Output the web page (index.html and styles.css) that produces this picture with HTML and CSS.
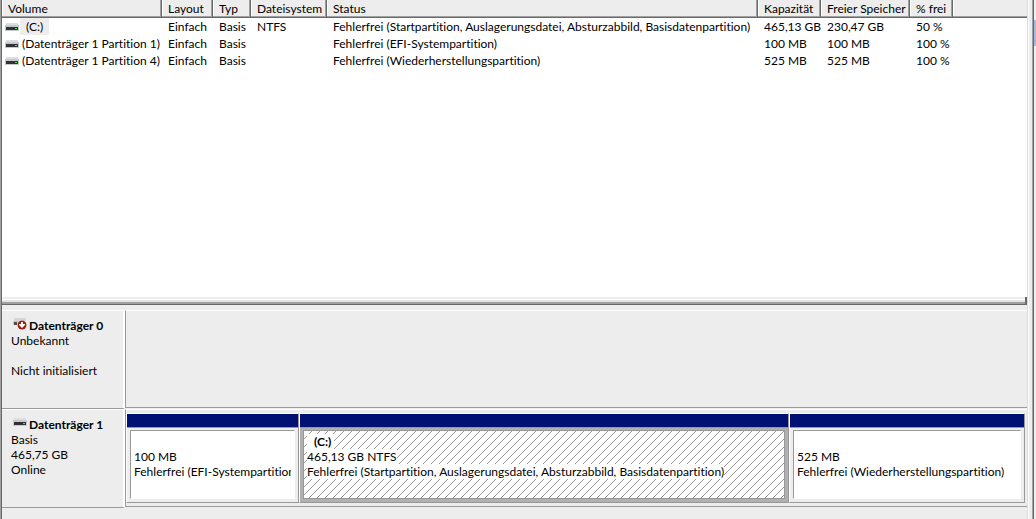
FILE: index.html
```html
<!DOCTYPE html>
<html lang="de">
<head>
  <meta charset="UTF-8">
  <meta name="viewport" content="width=device-width, initial-scale=1.0">
  <title>Datenträgerverwaltung</title>
  <link rel="stylesheet" href="styles.css">
</head>
<body>
  <svg class="symbols">
    <symbol id="drive" viewBox="0 0 14 10">
      <path d="M1 1h12v2H1z" fill="#dcdee1"/>
      <path d="M0 3h14v6H0z" fill="#c6c9cd"/>
      <path d="M1 5h12v3H1z" fill="#303236"/>
      <path d="M10 6h2v1h-2z" fill="#4be04b"/>
    </symbol>
    <symbol id="drive-error" viewBox="0 0 14 12">
      <path d="M1 0h12v3H1z" fill="#d3d6da"/>
      <path d="M0 3h6v4H0z" fill="#c4c7cb"/>
      <path d="M1 4h3v3H1z" fill="#4b4d50"/>
      <circle cx="9" cy="7" r="5" fill="#fff"/>
      <circle cx="9" cy="7" r="4.5" fill="#9c1c08"/>
      <path d="M8 4h2v2h2v1l-3 3-3-3V6h2z" fill="#fff"/>
    </symbol>
  </svg>

  <div class="window">
    <main class="console">
      <section class="volume-pane">
        <table class="volumes">
          <colgroup>
            <col class="col-volume">
            <col class="col-layout">
            <col class="col-type">
            <col class="col-fs">
            <col class="col-status">
            <col class="col-capacity">
            <col class="col-free">
            <col class="col-percent">
            <col>
          </colgroup>
          <thead>
            <tr>
              <th>Volume</th>
              <th>Layout</th>
              <th>Typ</th>
              <th>Dateisystem</th>
              <th>Status</th>
              <th>Kapazität</th>
              <th>Freier Speicher</th>
              <th>% frei</th>
              <th class="filler"></th>
            </tr>
          </thead>
          <tbody>
            <tr>
              <td class="name"><svg class="icon"><use href="#drive"/></svg><span class="selected">(C:)</span></td>
              <td>Einfach</td>
              <td>Basis</td>
              <td>NTFS</td>
              <td>Fehlerfrei (Startpartition, Auslagerungsdatei, Absturzabbild, Basisdatenpartition)</td>
              <td>465,13 GB</td>
              <td>230,47 GB</td>
              <td>50 %</td>
              <td></td>
            </tr>
            <tr>
              <td class="name"><svg class="icon"><use href="#drive"/></svg><span>(Datenträger 1 Partition 1)</span></td>
              <td>Einfach</td>
              <td>Basis</td>
              <td></td>
              <td>Fehlerfrei (EFI-Systempartition)</td>
              <td>100 MB</td>
              <td>100 MB</td>
              <td>100 %</td>
              <td></td>
            </tr>
            <tr>
              <td class="name"><svg class="icon"><use href="#drive"/></svg><span>(Datenträger 1 Partition 4)</span></td>
              <td>Einfach</td>
              <td>Basis</td>
              <td></td>
              <td>Fehlerfrei (Wiederherstellungspartition)</td>
              <td>525 MB</td>
              <td>525 MB</td>
              <td>100 %</td>
              <td></td>
            </tr>
          </tbody>
        </table>
      </section>

      <div class="splitter"></div>

      <section class="disk-pane">
        <div class="disk">
          <div class="disk-info">
            <h2><svg class="icon icon-error"><use href="#drive-error"/></svg>Datenträger 0</h2>
            <p>Unbekannt</p>
            <p>&nbsp;</p>
            <p>Nicht initialisiert</p>
          </div>
          <div class="disk-map"></div>
        </div>

        <div class="disk">
          <div class="disk-info">
            <h2><svg class="icon"><use href="#drive"/></svg>Datenträger 1</h2>
            <p>Basis</p>
            <p>465,75 GB</p>
            <p>Online</p>
          </div>
          <div class="disk-map">
            <div class="partition">
              <div class="bar"></div>
              <div class="body">
                <p>&nbsp;</p>
                <p><span>100 MB</span></p>
                <p><span>Fehlerfrei (EFI-Systempartition)</span></p>
              </div>
            </div>
            <div class="partition active">
              <div class="bar"></div>
              <div class="body">
                <p><span class="letter">(C:)</span></p>
                <p><span>465,13 GB NTFS</span></p>
                <p><span>Fehlerfrei (Startpartition, Auslagerungsdatei, Absturzabbild, Basisdatenpartition)</span></p>
              </div>
            </div>
            <div class="partition">
              <div class="bar"></div>
              <div class="body">
                <p>&nbsp;</p>
                <p><span>525 MB</span></p>
                <p><span>Fehlerfrei (Wiederherstellungspartition)</span></p>
              </div>
            </div>
          </div>
        </div>
      </section>
    </main>
    <aside class="edge"><div class="edge-mark"></div></aside>
  </div>
</body>
</html>
```
FILE: styles.css
```css
* {
  box-sizing: border-box;
}
body {
  margin: 0;
  background: #ededed;
  color: #000;
  font-family: Lato, "Open Sans", sans-serif;
  font-size: 12px;
  font-variant-ligatures: none;
  line-height: 15px;
}
h2, p {
  margin: 0;
  font-size: 12px;
  white-space: nowrap;
}
.symbols {
  position: absolute;
  width: 0;
  height: 0;
}
.icon {
  flex: none;
  width: 14px;
  height: 10px;
}
.icon-error {
  height: 12px;
}
.window {
  display: flex;
  min-height: 100vh;
  border-left: 1px solid #a0a0a0;
}
.console {
  flex: 1;
  min-width: 0;
  display: flex;
  flex-direction: column;
  border-left: 1px solid #696969;
}

/* volume list */
.volume-pane {
  height: 297px;
  background: #fff;
  overflow: hidden;
}
.volumes {
  width: 100%;
  table-layout: fixed;
  border-collapse: separate;
  border-spacing: 0;
}
.col-volume { width: 160px; }
.col-layout { width: 51px; }
.col-type { width: 38px; }
.col-fs { width: 76px; }
.col-status { width: 431px; }
.col-capacity { width: 63px; }
.col-free { width: 89px; }
.col-percent { width: 43px; }
.volumes th {
  height: 18px;
  padding: 0 0 0 6px;
  background: #ededed;
  border-right: 1px solid #696969;
  border-bottom: 1px solid #696969;
  box-shadow: inset -1px -1px #a0a0a0, inset 1px 0 #fff;
  font-weight: normal;
  text-align: left;
  white-space: nowrap;
}
.volumes th.filler {
  border-right: 0;
  box-shadow: inset 0 -1px #a0a0a0, inset 1px 0 #fff;
}
.volumes td {
  height: 17px;
  padding: 0 0 0 6px;
  white-space: nowrap;
}
.volumes td.name {
  display: flex;
  align-items: center;
  padding-left: 3px;
}
.name span {
  padding: 0 3px;
  line-height: 17px;
}
.name .selected {
  margin-left: 1px;
  padding: 0 6px;
  background: #ededed;
}

.splitter {
  height: 8px;
  border: 1px solid #696969;
  border-width: 0 2px 1px 0;
  background: linear-gradient(#ededed 2px, #fff 2px, #fff 3px, #e3e3e3 3px, #e3e3e3 5px, #a0a0a0 5px);
}

/* graphical view */
.disk-pane {
  flex: 1;
  padding-top: 5px;
}
.disk {
  display: flex;
  height: 99px;
}
.disk-info {
  width: 123px;
  flex: none;
  padding: 7px 0 0 9px;
  border-top: 1px solid #fff;
  border-right: 2px solid #fff;
  border-bottom: 1px solid #999;
}
.disk-info h2 {
  display: flex;
  gap: 2px;
  padding-left: 2px;
}
.disk-map {
  flex: 1;
  min-width: 0;
  display: grid;
  grid-template-columns: 173fr 490fr 236fr;
  height: 98px;
  padding: 3px 2px 3px 0;
  border-top: 1px solid #fff;
  border-left: 1px solid #999;
  border-bottom: 1px solid #999;
}
.partition {
  min-width: 0;
  display: flex;
  flex-direction: column;
  border: 1px solid #fff;
  border-right-color: #999;
  border-bottom-color: #999;
}
.bar {
  height: 14px;
  background: #001073;
  border-bottom: 1px solid #999;
}
.body {
  flex: 1;
  margin: 2px 3px 3px;
  padding: 3px 3px 0;
  background: #fff;
  border: 1px solid #fff;
  border-top-color: #999;
  border-left-color: #999;
  overflow: hidden;
}
.body p {
  overflow: hidden;
}
.body span {
  display: inline-block;
  vertical-align: top;
}
.active {
  background: #b0b0b0;
}
.active .body {
  border-color: #999;
  background: #fff linear-gradient(135deg, transparent 46%, #999 46%, #999 54%, transparent 54%) 0 0 / 8px 8px;
}
.active span {
  background: #fff;
}
.body .letter {
  padding: 0 3px 0 7px;
  font-weight: bold;
}

.edge {
  width: 9px;
  flex: none;
  background: linear-gradient(90deg, #dcdcdc 1px, #fff 1px, #fff 2px, #ededed 2px, #ededed 5px, #a0a0a0 5px, #a0a0a0 6px, #696969 6px, #696969 7px, #ededed 7px);
}
.edge-mark {
  width: 2px;
  height: 26px;
  margin: 20px 0 0 7px;
  background: #a9bbdc;
}
```
